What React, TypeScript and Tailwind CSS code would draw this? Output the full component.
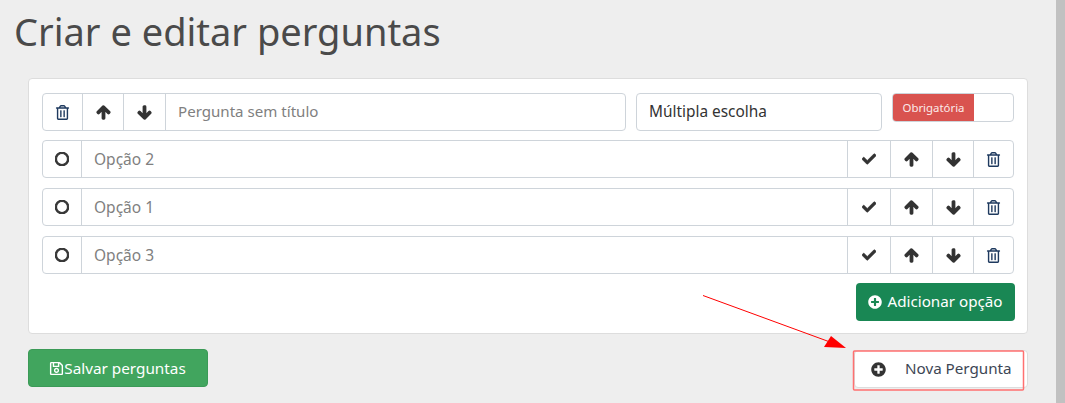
import { FaArrowDown, FaArrowUp, FaCheck, FaPlusCircle, FaRegCircle, FaRegSave, FaRegTrashAlt } from "react-icons/fa";

const options = ["Opção 2", "Opção 1", "Opção 3"];
const border = "border-[#ced4da]";

function OptionRow({ label }: { label: string }) {
  return (
    <div className={`flex h-[38px] rounded border ${border} bg-white`}>
      <div className={`flex w-[39px] items-center justify-center border-r ${border}`}>
        <FaRegCircle className="h-[14px] w-[14px] text-[#333]" stroke="currentColor" strokeWidth={40} />
      </div>
      <div className="flex flex-1 items-center pl-3 pt-px text-[15.5px] text-[#808080]">{label}</div>
      <div className={`flex w-[43px] items-center justify-center border-l ${border}`}>
        <FaCheck className="h-[14px] w-[14px] text-[#333]" stroke="currentColor" strokeWidth={25} />
      </div>
      <div className={`flex w-[42px] items-center justify-center border-l ${border}`}>
        <FaArrowUp className="h-[15px] w-[15px] text-[#333]" stroke="currentColor" strokeWidth={50} />
      </div>
      <div className={`flex w-[41px] items-center justify-center border-l ${border}`}>
        <FaArrowDown className="h-[15px] w-[15px] text-[#333]" stroke="currentColor" strokeWidth={50} />
      </div>
      <div className={`flex w-[40px] items-center justify-center border-l ${border}`}>
        <FaRegTrashAlt className="h-[15px] w-[15px] text-[#1f3a5f]" />
      </div>
    </div>
  );
}

export default function App() {
  return (
    <div className="relative flex h-[403px] w-[1065px] overflow-hidden bg-[#eeeeee] font-['Noto_Sans','Open_Sans',sans-serif]">
      <main className="w-[1056px] shrink-0 pl-[28px] pr-[28px]">
        <h1 className="ml-[-14px] mt-[7px] h-[49px] text-[38px] leading-[49px] text-[#4a4a4a]">Criar e editar perguntas</h1>
        <section className="mt-[22px] h-[256px] rounded border border-[#dddddd] bg-white px-[13px] pt-[14px]">
          <div className="flex items-start gap-[10px]">
            <div className={`flex h-[38px] w-[584px] rounded border ${border}`}>
              <div className="flex w-[39px] items-center justify-center">
                <FaRegTrashAlt className="h-[15px] w-[15px] text-[#1f3a5f]" />
              </div>
              <div className={`flex w-[41px] items-center justify-center border-l ${border}`}>
                <FaArrowUp className="h-[15px] w-[15px] text-[#333]" stroke="currentColor" strokeWidth={50} />
              </div>
              <div className={`flex w-[42px] items-center justify-center border-l ${border}`}>
                <FaArrowDown className="h-[15px] w-[15px] text-[#333]" stroke="currentColor" strokeWidth={50} />
              </div>
              <div className={`flex flex-1 items-center border-l ${border} pb-[2px] pl-3 text-[15.1px] text-[#808080]`}>Pergunta sem título</div>
            </div>
            <div className={`flex h-[38px] w-[246px] items-center rounded border ${border} pl-3 text-[15.4px] text-[#333]`}>Múltipla escolha</div>
            <div className={`flex h-[29px] w-[122px] overflow-hidden rounded border ${border}`}>
              <div className="flex w-[81px] items-center justify-center bg-[#d9534f] text-[11.4px] text-[#fbeaea]">Obrigatória</div>
            </div>
          </div>
          <div className="mt-[9px] flex flex-col gap-[10px]">
            {options.map((label) => (
              <OptionRow key={label} label={label} />
            ))}
          </div>
          <div className="mr-[-1px] mt-[9px] flex justify-end">
            <button className="flex h-[38px] w-[159px] items-center justify-center gap-[5px] rounded bg-[#198754] text-[15.2px] text-white">
              <FaPlusCircle className="h-[14px] w-[14px]" />
              <span className="mb-px">Adicionar opção</span>
            </button>
          </div>
        </section>
        <div className="mt-[15px] flex items-start justify-between">
          <button className="flex h-[38px] w-[180px] items-center justify-center rounded border border-[#3b9a57] bg-[#41a55e] pr-px text-[15.3px] text-white">
            <FaRegSave className="h-[15px] w-[15px]" />
            Salvar perguntas
          </button>
          <button className="mt-[1px] flex h-[38px] w-[174px] items-center rounded border border-[#dddddd] bg-white pl-[16px] text-[15.2px] text-[#3d4654]">
            <FaPlusCircle className="h-[15px] w-[15px] text-[#333]" />
            <span className="mb-px ml-[19px]">Nova Pergunta</span>
          </button>
        </div>
      </main>
      <div className="flex-1 bg-[#c1c1c1]" />
      {/* anotação por cima da tela */}
      <svg className="absolute left-0 top-0" width="1065" height="403" viewBox="0 0 1065 403" fill="none">
        <line x1="703" y1="295.5" x2="830" y2="342" stroke="#ff0000" strokeWidth="1" />
        <polygon points="846,348 824,347 831,336" fill="#ff0000" />
        <rect x="853.5" y="351" width="170" height="39" rx="1" stroke="#ff7070" strokeWidth="1.5" />
      </svg>
    </div>
  );
}
